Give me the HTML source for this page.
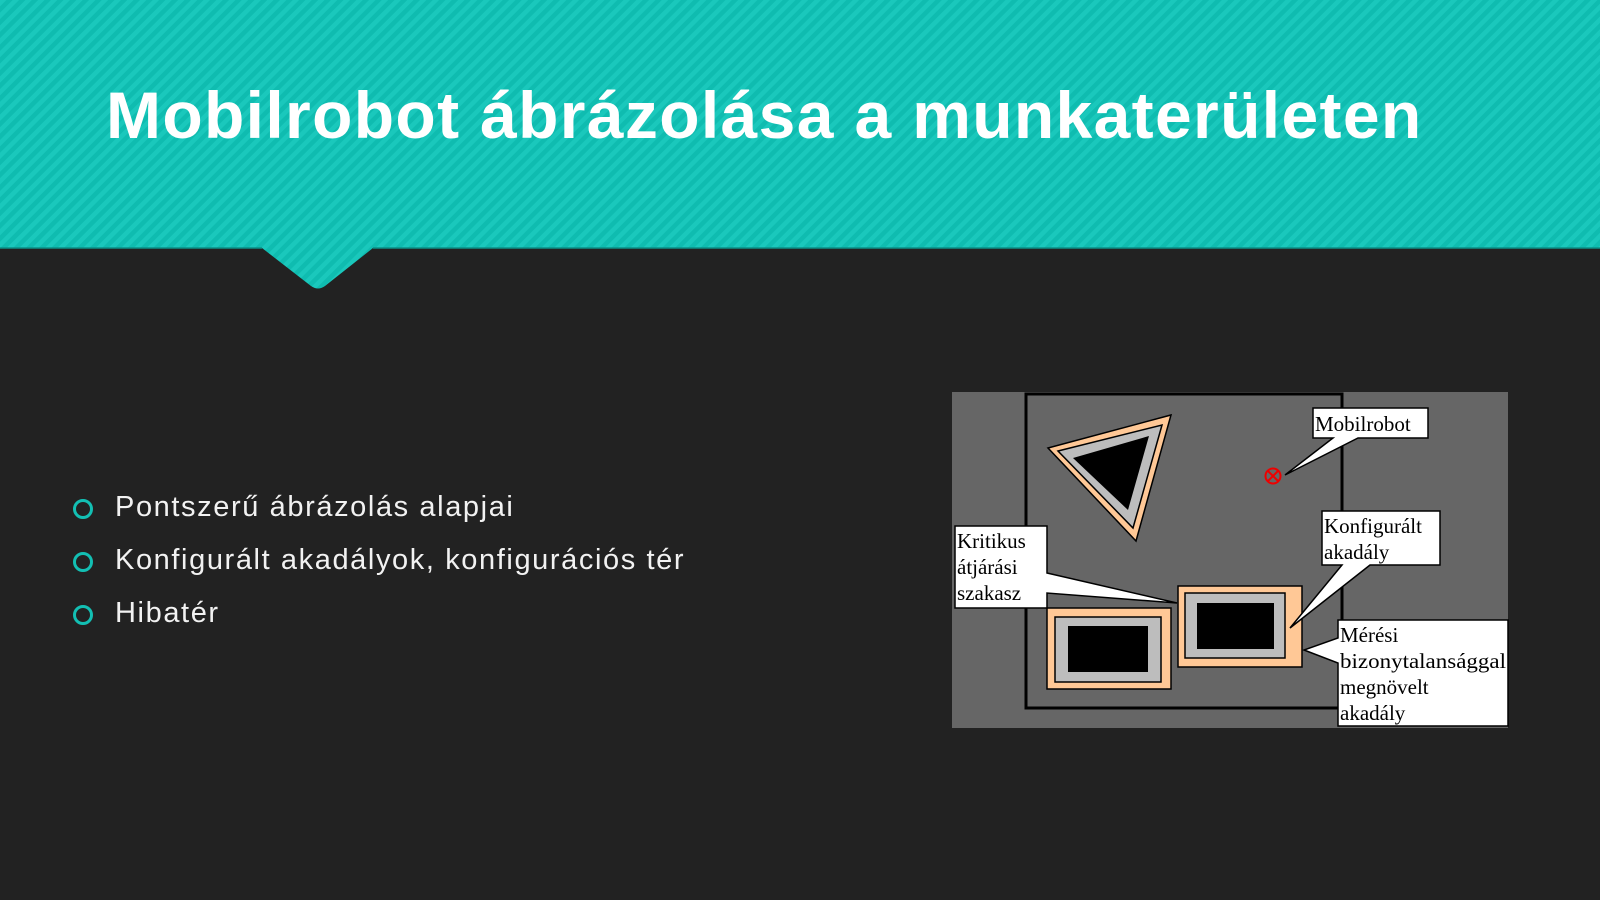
<!DOCTYPE html>
<html><head><meta charset="utf-8"><style>
html,body{margin:0;padding:0;width:1600px;height:900px;overflow:hidden;background:#222222;font-family:"Liberation Sans",sans-serif}
.t{position:absolute;left:106px;top:77px;color:#fff;font-weight:bold;font-size:66px;white-space:nowrap;letter-spacing:1.35px}
.b{position:absolute;left:115px;color:#f2f2f2;font-size:29px;white-space:nowrap;letter-spacing:1.6px}
.c{position:absolute;left:73px;width:14px;height:14px;border:3px solid #13bfb3;border-radius:50%}
</style></head><body>
<svg width="1600" height="900" style="position:absolute;left:0;top:0">
<defs><pattern id="st" width="9" height="9" patternUnits="userSpaceOnUse" patternTransform="rotate(45)">
<rect width="9" height="9" fill="#0fbcb0"/><rect width="4.5" height="9" fill="#1ac8bc"/></pattern></defs>
<path d="M0 0H1600V248H373L325 286Q318 291 311 286L262 248H0Z" fill="url(#st)"/>
<line x1="0" y1="248" x2="262" y2="248" stroke="#0a8f86" stroke-width="1.5"/>
<line x1="373" y1="248" x2="1600" y2="248" stroke="#0a8f86" stroke-width="1.5"/>
<g font-family="Liberation Serif,serif" font-size="21" fill="#000">
<rect x="952" y="392" width="556" height="336" fill="#666"/>
<rect x="1026" y="394" width="316" height="314" fill="#666" stroke="#000" stroke-width="3"/>
<polygon points="1048,448 1171,415 1136,541" fill="#ffc896" stroke="#000" stroke-width="1.5"/>
<polygon points="1058,451 1162,425 1133,528" fill="#bdbdbd" stroke="#000" stroke-width="1.5"/>
<polygon points="1073,458 1149,436 1128,510" fill="#000"/>
<rect x="1178" y="586" width="124" height="81" fill="#ffc896" stroke="#000" stroke-width="1.5"/>
<rect x="1185" y="593" width="100" height="65" fill="#bdbdbd" stroke="#000" stroke-width="1.5"/>
<rect x="1197" y="603" width="77" height="46" fill="#000"/>
<rect x="1047" y="608" width="124" height="81" fill="#ffc896" stroke="#000" stroke-width="1.5"/>
<rect x="1055" y="617" width="106" height="65" fill="#bdbdbd" stroke="#000" stroke-width="1.5"/>
<rect x="1068" y="626" width="80" height="46" fill="#000"/>
<circle cx="1273" cy="476" r="7.5" fill="none" stroke="#e00" stroke-width="2"/>
<path d="M1268 471L1278 481M1278 471L1268 481" stroke="#e00" stroke-width="2"/>
<path d="M1313 408H1428V438H1358L1285 475L1333 438H1313Z" fill="#fff" stroke="#000" stroke-width="1.5"/>
<text x="1315" y="431">Mobilrobot</text>
<path d="M1322 511H1440V565H1370L1290 628L1342 565H1322Z" fill="#fff" stroke="#000" stroke-width="1.5"/>
<text x="1324" y="533">Konfigurált</text><text x="1324" y="559">akadály</text>
<path d="M955 526H1047V573L1177 603L1047 593V608H955Z" fill="#fff" stroke="#000" stroke-width="1.5"/>
<text x="957" y="548">Kritikus</text><text x="957" y="574">átjárási</text><text x="957" y="600">szakasz</text>
<path d="M1338 620H1508V726H1338V663L1304 650L1338 638Z" fill="#fff" stroke="#000" stroke-width="1.5"/>
<text x="1340" y="642">Mérési</text><text x="1340" y="668" textLength="166" lengthAdjust="spacingAndGlyphs">bizonytalansággal</text><text x="1340" y="694">megnövelt</text><text x="1340" y="720">akadály</text>
</g>
</svg>
<div class="t">Mobilrobot ábrázolása a munkaterületen</div>
<div class="c" style="top:499px"></div><div class="b" style="top:491px">Pontszerű ábrázolás alapjai</div>
<div class="c" style="top:552px"></div><div class="b" style="top:544px">Konfigurált akadályok, konfigurációs tér</div>
<div class="c" style="top:605px"></div><div class="b" style="top:597px">Hibatér</div>
</body></html>
